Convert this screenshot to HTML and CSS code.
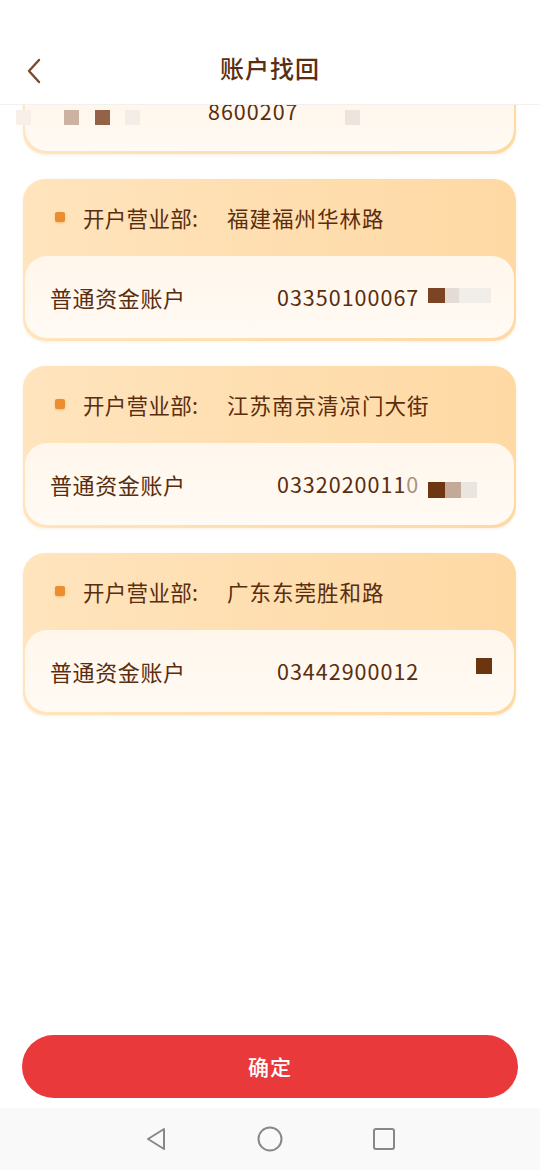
FILE: index.html
```html
<!DOCTYPE html>
<html lang="zh-CN">
<head>
<meta charset="utf-8">
<title>账户找回</title>
<link rel="stylesheet" href="styles.css">
</head>
<body>
<div class="app">
  <div class="list">
    <div class="card tail">
      <div class="panel tail-panel">
        <div class="row tail-row">
          <span class="label"></span>
          <span class="num">8600207</span>
          <i class="mz" style="left:-9px;top:13px;width:15px;height:15px;background:#f7efe8"></i>
          <i class="mz" style="left:39px;top:13px;width:15px;height:15px;background:#ccb2a0"></i>
          <i class="mz" style="left:70px;top:13px;width:15px;height:15px;background:#936247"></i>
          <i class="mz" style="left:100px;top:13px;width:15px;height:15px;background:#f4ece6"></i>
          <i class="mz" style="left:320px;top:13px;width:15px;height:15px;background:#ede4dd"></i>
        </div>
      </div>
    </div>

    <div class="card">
      <div class="card-head">
        <span class="dot"></span>
        <span class="h-label">开户营业部:</span>
        <span class="h-value">福建福州华林路</span>
      </div>
      <div class="panel">
        <div class="row">
          <span class="label">普通资金账户</span>
          <span class="num">03350100067</span>
          <i class="mz" style="left:403px;top:5px;width:17px;height:15px;background:#7b4422"></i>
          <i class="mz" style="left:420px;top:5px;width:14px;height:15px;background:#e3dbd5"></i>
          <i class="mz" style="left:434px;top:5px;width:32px;height:15px;background:#f1ede9"></i>
        </div>
      </div>
    </div>

    <div class="card">
      <div class="card-head">
        <span class="dot"></span>
        <span class="h-label">开户营业部:</span>
        <span class="h-value">江苏南京清凉门大街</span>
      </div>
      <div class="panel">
        <div class="row">
          <span class="label">普通资金账户</span>
          <span class="num">0332020011<span class="cut">0</span></span>
          <i class="mz" style="left:403px;top:12px;width:17px;height:16px;background:#6e3512"></i>
          <i class="mz" style="left:420px;top:12px;width:16px;height:16px;background:#c4a898"></i>
          <i class="mz" style="left:436px;top:12px;width:16px;height:16px;background:#ebe5e1"></i>
        </div>
      </div>
    </div>

    <div class="card">
      <div class="card-head">
        <span class="dot"></span>
        <span class="h-label">开户营业部:</span>
        <span class="h-value">广东东莞胜和路</span>
      </div>
      <div class="panel">
        <div class="row">
          <span class="label">普通资金账户</span>
          <span class="num">03442900012</span>
          <i class="mz" style="left:451px;top:1px;width:16px;height:16px;background:#6b3510"></i>
        </div>
      </div>
    </div>
  </div>

  <header class="topbar">
    <svg class="back" width="20" height="28" viewBox="0 0 20 28"><path d="M15 3 L5 14 L15 25" fill="none" stroke="#7a4a2a" stroke-width="2.4" stroke-linecap="round" stroke-linejoin="round"/></svg>
    <h1 class="title">账户找回</h1>
  </header>

  <div class="footer">
    <button class="confirm">确定</button>
  </div>

  <nav class="navbar">
    <svg width="26" height="26" viewBox="0 0 26 26"><path d="M21 3 L5 13 L21 23 Z" fill="none" stroke="#888" stroke-width="2" stroke-linejoin="round"/></svg>
    <svg width="26" height="26" viewBox="0 0 26 26"><circle cx="13" cy="13" r="11.5" fill="none" stroke="#888" stroke-width="2"/></svg>
    <svg width="26" height="26" viewBox="0 0 26 26"><rect x="3" y="3" width="20" height="20" rx="2" fill="none" stroke="#888" stroke-width="2"/></svg>
  </nav>
</div>
</body>
</html>
```

FILE: styles.css
```css
* { box-sizing: border-box; }
html, body { margin: 0; padding: 0; }
body {
  width: 540px;
  height: 1170px;
  background: #ffffff;
  font-family: "Noto Sans CJK SC", "Noto Sans", sans-serif;
  color: #5a2d0e;
  overflow: hidden;
}
.app {
  position: relative;
  width: 540px;
  height: 1170px;
  display: flex;
  flex-direction: column;
}
.topbar {
  order: 0;
  height: 105px;
  background: #ffffff;
  border-bottom: 1px solid #f3f1ef;
  display: flex;
  align-items: center;
  justify-content: center;
  position: relative;
  z-index: 2;
  padding-top: 32px;
}
.back {
  position: absolute;
  left: 24px;
  top: 57px;
}
.title {
  margin: 0;
  font-size: 24px;
  font-weight: 500;
  color: #5c2e0f;
  letter-spacing: 1px;
  margin-top: -2px;
}
.list {
  order: 1;
  flex: 1;
  display: flex;
  flex-direction: column;
  gap: 25px;
  padding: 0 24px 0 23px;
}
.card {
  height: 162px;
  flex-shrink: 0;
  border-radius: 22px;
  background: linear-gradient(90deg, #ffe4bd 0%, #fed9a4 100%);
  padding: 0 2px 3px 2px;
  display: flex;
  flex-direction: column;
  box-shadow: 0 1px 3px rgba(240, 190, 130, 0.25);
}
.card.tail {
  height: 51px;
  border-radius: 0 0 22px 22px;
  margin-top: -2px;
}
.card-head {
  height: 77px;
  display: flex;
  align-items: center;
  padding-left: 30px;
  font-size: 21.5px;
  color: #5a2d0e;
}
.dot {
  width: 10px;
  height: 10px;
  border-radius: 2px;
  background: #ec8e30;
  box-shadow: 0 1px 2px rgba(236, 142, 48, 0.45);
  margin-right: 18px;
  margin-top: -2px;
}
.h-label { width: 144px; letter-spacing: 0.3px; }
.h-value { letter-spacing: 1px; }
.panel {
  flex: 1;
  background: linear-gradient(180deg, #fff7ec 0%, #fffaf4 100%);
  border-radius: 22px;
  display: flex;
  align-items: center;
}
.tail-panel {
  border-radius: 0 0 22px 22px;
  align-items: flex-start;
}
.row {
  position: relative;
  display: flex;
  align-items: center;
  width: 100%;
  padding-left: 25px;
  font-size: 21.5px;
  line-height: 28px;
  color: #5a2d0e;
}
.tail-row { margin-top: -6px; }
.tail-row .label { width: 158px; }
.label { width: 227px; font-size: 22px; letter-spacing: 0.6px; }
.num { letter-spacing: 1px; }
.cut { opacity: 0.5; }
.mz {
  position: absolute;
  display: block;
}
.footer {
  order: 2;
  padding: 0 22px 10px 22px;
}
.confirm {
  width: 100%;
  height: 63px;
  border: none;
  border-radius: 32px;
  background: #e9393b;
  color: #ffffff;
  font-family: "Noto Sans CJK SC", "Noto Sans", sans-serif;
  font-size: 21px;
  font-weight: 500;
  letter-spacing: 1px;
  padding-bottom: 3px;
}
.navbar {
  order: 3;
  height: 62px;
  background: #f9f9f9;
  display: flex;
  align-items: center;
  justify-content: center;
  gap: 88px;
}
```
